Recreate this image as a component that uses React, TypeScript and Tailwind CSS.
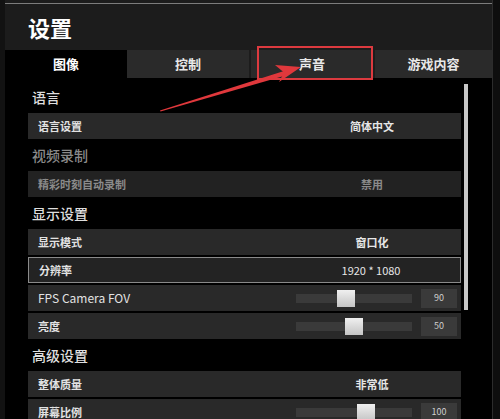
import React from "react";

const font = { fontFamily: '"Noto Sans CJK SC", "Noto Sans", sans-serif' };

type Row =
  | { kind: "value"; label: string; value: string; disabled?: boolean; focused?: boolean; latin?: boolean }
  | { kind: "slider"; label: string; value: number; thumb: number; latin?: boolean };

type Section = { title: string; disabled?: boolean; rows: Row[] };

const sections: Section[] = [
  { title: "语言", rows: [{ kind: "value", label: "语言设置", value: "简体中文" }] },
  {
    title: "视频录制",
    disabled: true,
    rows: [{ kind: "value", label: "精彩时刻自动录制", value: "禁用", disabled: true }],
  },
  {
    title: "显示设置",
    rows: [
      { kind: "value", label: "显示模式", value: "窗口化" },
      { kind: "value", label: "分辨率", value: "1920 * 1080", focused: true, latin: true },
      { kind: "slider", label: "FPS Camera FOV", value: 90, thumb: 41, latin: true },
      { kind: "slider", label: "亮度", value: 50, thumb: 49 },
    ],
  },
  {
    title: "高级设置",
    rows: [
      { kind: "value", label: "整体质量", value: "非常低" },
      { kind: "slider", label: "屏幕比例", value: 100, thumb: 61 },
    ],
  },
];

const tabs = ["图像", "控制", "声音", "游戏内容"];

function SettingRow({ row }: { row: Row }) {
  const disabled = row.kind === "value" && row.disabled;
  const focused = row.kind === "value" && row.focused;
  return (
    <div
      className={`flex h-[26px] shrink-0 items-center ${
        focused ? "border border-[#8a8a8a] bg-[#232323]" : disabled ? "bg-[#222222]" : "bg-[#292929]"
      }`}
    >
      <span
        className={`flex-1 pl-[10px] ${
          row.latin && row.kind === "slider" ? "text-[12px] font-normal" : "text-[11px] font-bold"
        } ${disabled ? "text-[#8a8a8a]" : "text-[#e2e2e2]"}`}
      >
        {row.label}
      </span>
      {row.kind === "value" ? (
        <span
          className={`w-[178px] text-center text-[11px] ${row.latin ? "font-normal" : "font-bold"} ${
            disabled ? "text-[#8a8a8a]" : "text-[#e6e6e6]"
          }`}
        >
          {row.value}
        </span>
      ) : (
        <div className="flex items-center gap-[9px] pr-[4px]">
          <div className="relative h-[9px] w-[116px] bg-[#3a3a3a]">
            <div
              className="absolute top-[-4px] h-[17px] w-[18px] bg-gradient-to-b from-[#f0f0f0] to-[#c4c4c4]"
              style={{ left: row.thumb }}
            />
          </div>
          <div className="flex h-[19px] w-[36px] items-center justify-center bg-[#3a3a3a] text-[9px] text-[#cfcfcf]">
            {row.value}
          </div>
        </div>
      )}
    </div>
  );
}

export default function App() {
  return (
    <div className="relative flex h-[419px] w-[500px] overflow-hidden bg-black" style={font}>
      <div className="w-[5px] shrink-0 bg-[#121212]" />

      <div className="flex w-[487px] shrink-0 flex-col">
        {/* Title bar */}
        <div className="h-[50px] shrink-0 bg-[#1c1c1c]">
          <div className="mt-[3px] h-px bg-[#7c7c7c]" />
          <h1 className="pl-[23px] pt-[8px] text-[22px] font-bold leading-[30px] text-white">设置</h1>
        </div>

        {/* Tabs */}
        <div className="flex h-[28px] shrink-0 bg-[#1c1c1c]">
          {tabs.map((t, i) => (
            <div
              key={t}
              className={`flex items-center justify-center text-[13px] font-bold ${
                i === 0
                  ? "w-[122px] bg-black text-white"
                  : i === 3
                  ? "ml-[2px] flex-1 bg-[#2a2a2a] text-[#e8e8e8]"
                  : i === 2
                  ? "ml-[2px] w-[122px] bg-[#2a2a2a] text-[#e8e8e8]"
                  : "w-[122px] bg-[#2a2a2a] text-[#e8e8e8]"
              }`}
            >
              {t}
            </div>
          ))}
        </div>

        {/* Content */}
        <div className="flex shrink-0">
          <div className="w-[456px] pl-[23px] pt-[3px]">
            {sections.map((s) => (
              <div key={s.title}>
                <div
                  className={`flex h-[32px] items-center pl-[4px] text-[14px] font-medium ${
                    s.disabled ? "text-[#8a8a8a]" : "text-[#dedede]"
                  }`}
                >
                  {s.title}
                </div>
                <div className="flex flex-col gap-[2px]">
                  {s.rows.map((r) => (
                    <SettingRow key={r.label} row={r} />
                  ))}
                </div>
              </div>
            ))}
          </div>
          <div className="ml-[3px] w-[5px] pt-[6px]">
            <div className="h-[226px] w-[4px] bg-[#c8c8c8]" />
          </div>
        </div>
      </div>

      <div className="w-px shrink-0 bg-[#2c2c2c]" />
      <div className="flex-1 bg-[#0e0e0e]" />

      {/* Annotation: red box + arrow */}
      <div className="pointer-events-none absolute left-[257px] top-[46px] h-[34px] w-[116px] border-2 border-[#dc3a3f]" />
      <svg className="pointer-events-none absolute left-0 top-0" width="500" height="419" viewBox="0 0 500 419">
        <polygon points="160,110.5 284,71 285.5,75.5 160.5,111.5" fill="#e0383c" />
        <polygon points="301,67 279,82 284,72.5 275,65" fill="#e0383c" />
      </svg>
    </div>
  );
}
